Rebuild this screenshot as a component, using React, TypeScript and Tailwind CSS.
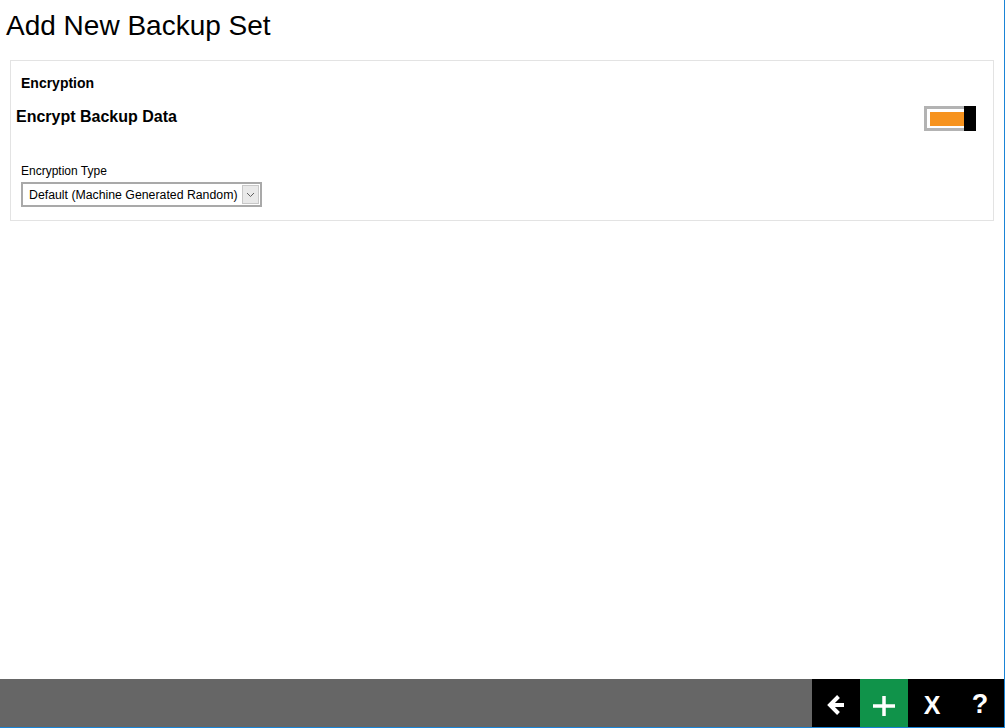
import React from 'react';

function Toggle() {
  return (
    <div className="relative h-[25px] w-[52px] border-[3px] border-[#b3b3b3] bg-white">
      <div className="absolute left-[3px] top-[3px] h-[14px] w-[34px] bg-[#f7931e]" />
      <div className="absolute -right-[3px] -top-[3px] h-[25px] w-[12px] bg-black" />
    </div>
  );
}

function Select() {
  return (
    <div className="flex h-[25px] w-[241px] items-center border-2 border-[#a9a9a9] bg-white pl-[6px] pr-[1px]">
      <span className="flex-1 text-[12.3px] leading-[14px] text-black">Default (Machine Generated Random)</span>
      <div className="flex h-[19px] w-[17px] items-center justify-center border border-[#c8c8c8] bg-[#e9e9e9]">
        <svg width="9" height="6" viewBox="0 0 9 6">
          <path d="M1 1 L4.5 4.5 L8 1" fill="none" stroke="#606060" strokeWidth="1" />
        </svg>
      </div>
    </div>
  );
}

export default function App() {
  return (
    <div
      className="flex h-[728px] w-[1005px] flex-col border-r border-b border-[#1a84d6] bg-white"
      style={{ fontFamily: '"Liberation Sans", Arial, sans-serif' }}
    >
      {/* Page body */}
      <div className="flex-1">
        <h1 className="pl-[6px] pt-[10px] text-[28px] leading-[32px] text-black">Add New Backup Set</h1>

        <div className="mx-[10px] mt-[18px] border border-[#e3e3e3] pb-[13px] pl-[10px] pr-[17px] pt-[14px]">
          <div className="text-[14px] font-bold leading-[16px] text-black">Encryption</div>

          <div className="mt-[16px] flex items-start justify-between">
            <div className="-ml-[5px] pt-[1px] text-[16px] font-bold leading-[18px] text-black">Encrypt Backup Data</div>
            <div className="-mt-[1px]">
              <Toggle />
            </div>
          </div>

          <div className="mt-[33px] text-[12px] leading-[14px] text-black">Encryption Type</div>
          <div className="mt-[4px]">
            <Select />
          </div>
        </div>
      </div>

      {/* Footer bar */}
      <div className="flex h-[48px] justify-end bg-[#666666]">
        <button className="flex h-[48px] w-[48px] items-center justify-center bg-black pt-[4px]">
          <svg width="18" height="22" viewBox="0 0 18 22">
            <path d="M17 11 H4 M11.5 2.5 L3 11 L11.5 19.5" fill="none" stroke="white" strokeWidth="4" strokeLinejoin="miter" />
          </svg>
        </button>
        <button className="flex h-[48px] w-[48px] items-center justify-center bg-[#10934a] pt-[6px]">
          <svg width="22" height="20" viewBox="0 0 22 20">
            <path d="M11 0 V20 M0 10 H22" fill="none" stroke="white" strokeWidth="3.5" />
          </svg>
        </button>
        <button className="flex h-[48px] w-[48px] items-center justify-center bg-black pt-[5px] text-[25px] font-bold leading-none text-white">
          X
        </button>
        <button className="flex h-[48px] w-[48px] items-center justify-center bg-black pt-[3px] text-[27px] font-bold leading-none text-white">
          ?
        </button>
      </div>
    </div>
  );
}
